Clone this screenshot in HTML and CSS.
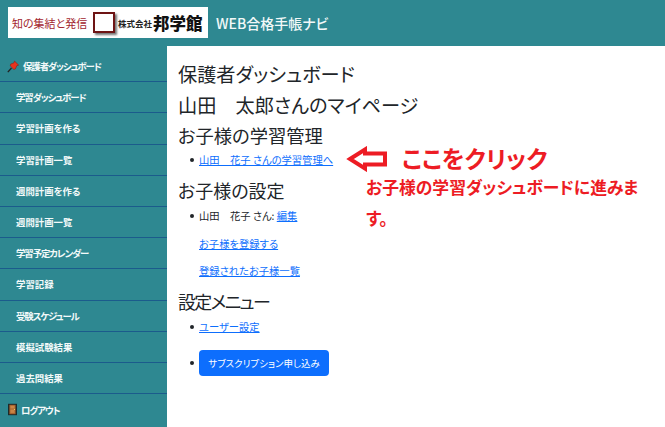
FILE: index.html
```html
<!DOCTYPE html>
<html lang="ja">
<head>
<meta charset="utf-8">
<title>WEB合格手帳ナビ</title>
<link rel="stylesheet" href="styles.css">
</head>
<body>
<header class="topbar">
  <div class="logo">
    <span class="logo-slogan">知の集結と発信</span>
    <span class="logo-mark"></span>
    <span class="logo-kabu">株式会社</span>
    <span class="logo-name">邦学館</span>
  </div>
  <div class="brand">WEB合格手帳ナビ</div>
</header>
<div class="layout">
  <nav class="sidebar">
    <a class="nav-item nav-icon nav-pin nav-kana" href="#"><svg class="icon" viewBox="0 0 12 12"><path d="M.8 11.6 4.5 7.5" stroke="#222" stroke-width="1.3" fill="none"/><path d="M7.5 .6 11.6 4.6 9.8 5.2 8.4 8.4 6.8 8.9 3.2 5.3 3.7 3.6 7 2.3Z" fill="#e8321c" stroke="#7a1a10" stroke-width=".5"/></svg>保護者ダッシュボード</a>
    <a class="nav-item nav-kana" href="#">学習ダッシュボード</a>
    <a class="nav-item" href="#">学習計画を作る</a>
    <a class="nav-item" href="#">学習計画一覧</a>
    <a class="nav-item" href="#">週間計画を作る</a>
    <a class="nav-item" href="#">週間計画一覧</a>
    <a class="nav-item nav-kana" href="#">学習予定カレンダー</a>
    <a class="nav-item" href="#">学習記録</a>
    <a class="nav-item nav-kana" href="#">受験スケジュール</a>
    <a class="nav-item" href="#">模擬試験結果</a>
    <a class="nav-item" href="#">過去問結果</a>
    <a class="nav-item nav-icon nav-last nav-kana" href="#"><svg class="icon" viewBox="0 0 12 12"><rect x="1" y=".3" width="9" height="11.4" fill="#1d2a2a"/><rect x="2.4" y="1.3" width="6.2" height="9.4" fill="#a8622c"/><rect x="3.4" y="2.3" width="4.2" height="2.7" fill="#c98546"/><rect x="3.4" y="6" width="4.2" height="3.4" fill="#c98546"/><rect x="7" y="5.4" width="1" height="1" fill="#f0d060"/></svg>ログアウト</a>
  </nav>
  <main class="main">
    <h1 class="title">保護者ダッシュボード</h1>
    <h1 class="title">山田　太郎さんのマイページ</h1>
    <h2 class="section section-first">お子様の学習管理</h2>
    <ul class="list">
      <li><a href="#">山田　花子 さんの学習管理へ</a></li>
    </ul>
    <h2 class="section section-second">お子様の設定</h2>
    <ul class="list">
      <li><span>山田　花子 さん: <a href="#">編集</a></span></li>
    </ul>
    <p class="sublink sublink-first"><a href="#">お子様を登録する</a></p>
    <p class="sublink"><a href="#">登録されたお子様一覧</a></p>
    <h2 class="section section-menu">設定メニュー</h2>
    <ul class="list">
      <li><a href="#">ユーザー設定</a></li>
      <li class="btn-row"><a class="btn" href="#">サブスクリプション申し込み</a></li>
    </ul>
    <svg class="arrow" viewBox="0 0 42 26"><path d="M4 13 19 3.5V7.5H39V18.5H19V22.5Z" fill="#fff" stroke="#ed1c24" stroke-width="4"/></svg>
    <div class="note-head">ここをクリック</div>
    <div class="note-body">お子様の学習ダッシュボードに進みます。</div>
  </main>
</div>
</body>
</html>
```
FILE: styles.css
```css
* { box-sizing: border-box; }
html, body { margin: 0; height: 100%; overflow: hidden; }
body {
  width: 665px;
  height: 427px;
  background: #2e8891;
  font-family: "Noto Sans CJK JP", "Noto Sans", sans-serif;
  font-feature-settings: "palt";
  color: #212529;
  display: flex;
  flex-direction: column;
}
.topbar {
  height: 46px;
  display: flex;
  align-items: flex-start;
  padding: 7px 0 0 8px;
  flex: none;
}
.logo {
  width: 200px;
  height: 31px;
  background: #fff;
  display: flex;
  align-items: center;
  padding-left: 4px;
  white-space: nowrap;
}
.logo-slogan { color: #a3262e; font-size: 11px; width: 81px; }
.logo-mark {
  width: 22px;
  height: 21px;
  border: 2px solid #6e1414;
  box-shadow: 2px 2px 2px #777;
  margin-right: 3px;
  background: #fff;
}
.logo-kabu { font-weight: 700; font-size: 8.5px; color: #222; margin-right: 1px; }
.logo-name { font-weight: 900; font-size: 16.5px; color: #111; }
.brand { color: #f2f8f8; font-size: 14px; font-weight: 500; margin: 5px 0 0 8px; line-height: 22px; white-space: nowrap; }
.layout { display: flex; flex: 1; min-height: 0; }
.sidebar { width: 167px; flex: none; display: flex; flex-direction: column; padding-top: 5px; }
.nav-item {
  height: 31.2px;
  flex: none;
  display: flex;
  align-items: center;
  padding-left: 16px;
  border-bottom: 1px solid #1b5b8c;
  color: #f4fafa;
  font-size: 9.4px;
  font-weight: 700;
  text-decoration: none;
  white-space: nowrap;
}
.nav-kana { letter-spacing: -1.05px; }
.nav-icon { padding-left: 7px; gap: 2px; }
.nav-pin { gap: 4px; }
.nav-last { border-bottom: 0; }
.icon { width: 12px; height: 13px; flex: none; }
.main { position: relative; flex: 1; background: #fff; padding: 14px 0 0 11px; min-width: 0; }
.title { font-size: 19.2px; font-weight: 400; margin: 0; line-height: 28px; height: 31px; color: #212529; }
.section { font-size: 18px; font-weight: 400; margin: 9px 0 4px; line-height: 26px; color: #212529; }
.section-first { margin: 0 0 3px; font-size: 18.3px; }
.section-menu { letter-spacing: -1.7px; }
.list { margin: 0; padding: 0 0 0 12px; list-style: none; font-size: 10.3px; line-height: 17px; }
.list li { margin-bottom: 1px; display: flex; align-items: center; gap: 5px; }
.list li::before { content: ""; width: 4px; height: 4px; border-radius: 50%; background: #212529; flex: none; }
a { color: #0d6efd; }
.sublink { margin: 10px 0 0; padding-left: 21px; font-size: 10.3px; line-height: 17px; }
.sublink-first { margin-top: 11px; }
.list .btn-row { margin-top: 15px; }
.btn {
  display: inline-block;
  background: #0d6efd;
  color: #fff;
  text-decoration: none;
  border-radius: 4px;
  font-size: 9.5px;
  line-height: 26px;
  height: 26px;
  width: 130px;
  text-align: center;
  white-space: nowrap;
}
.arrow { position: absolute; left: 179px; top: 100px; width: 42px; height: 26px; }
.note-head { position: absolute; left: 235px; top: 99px; font-size: 23.7px; font-weight: 700; color: #ed1c24; line-height: 26px; white-space: nowrap; }
.note-body { position: absolute; left: 199px; top: 126px; width: 278px; font-size: 16.8px; font-weight: 700; color: #ed1c24; line-height: 31px; }
```
